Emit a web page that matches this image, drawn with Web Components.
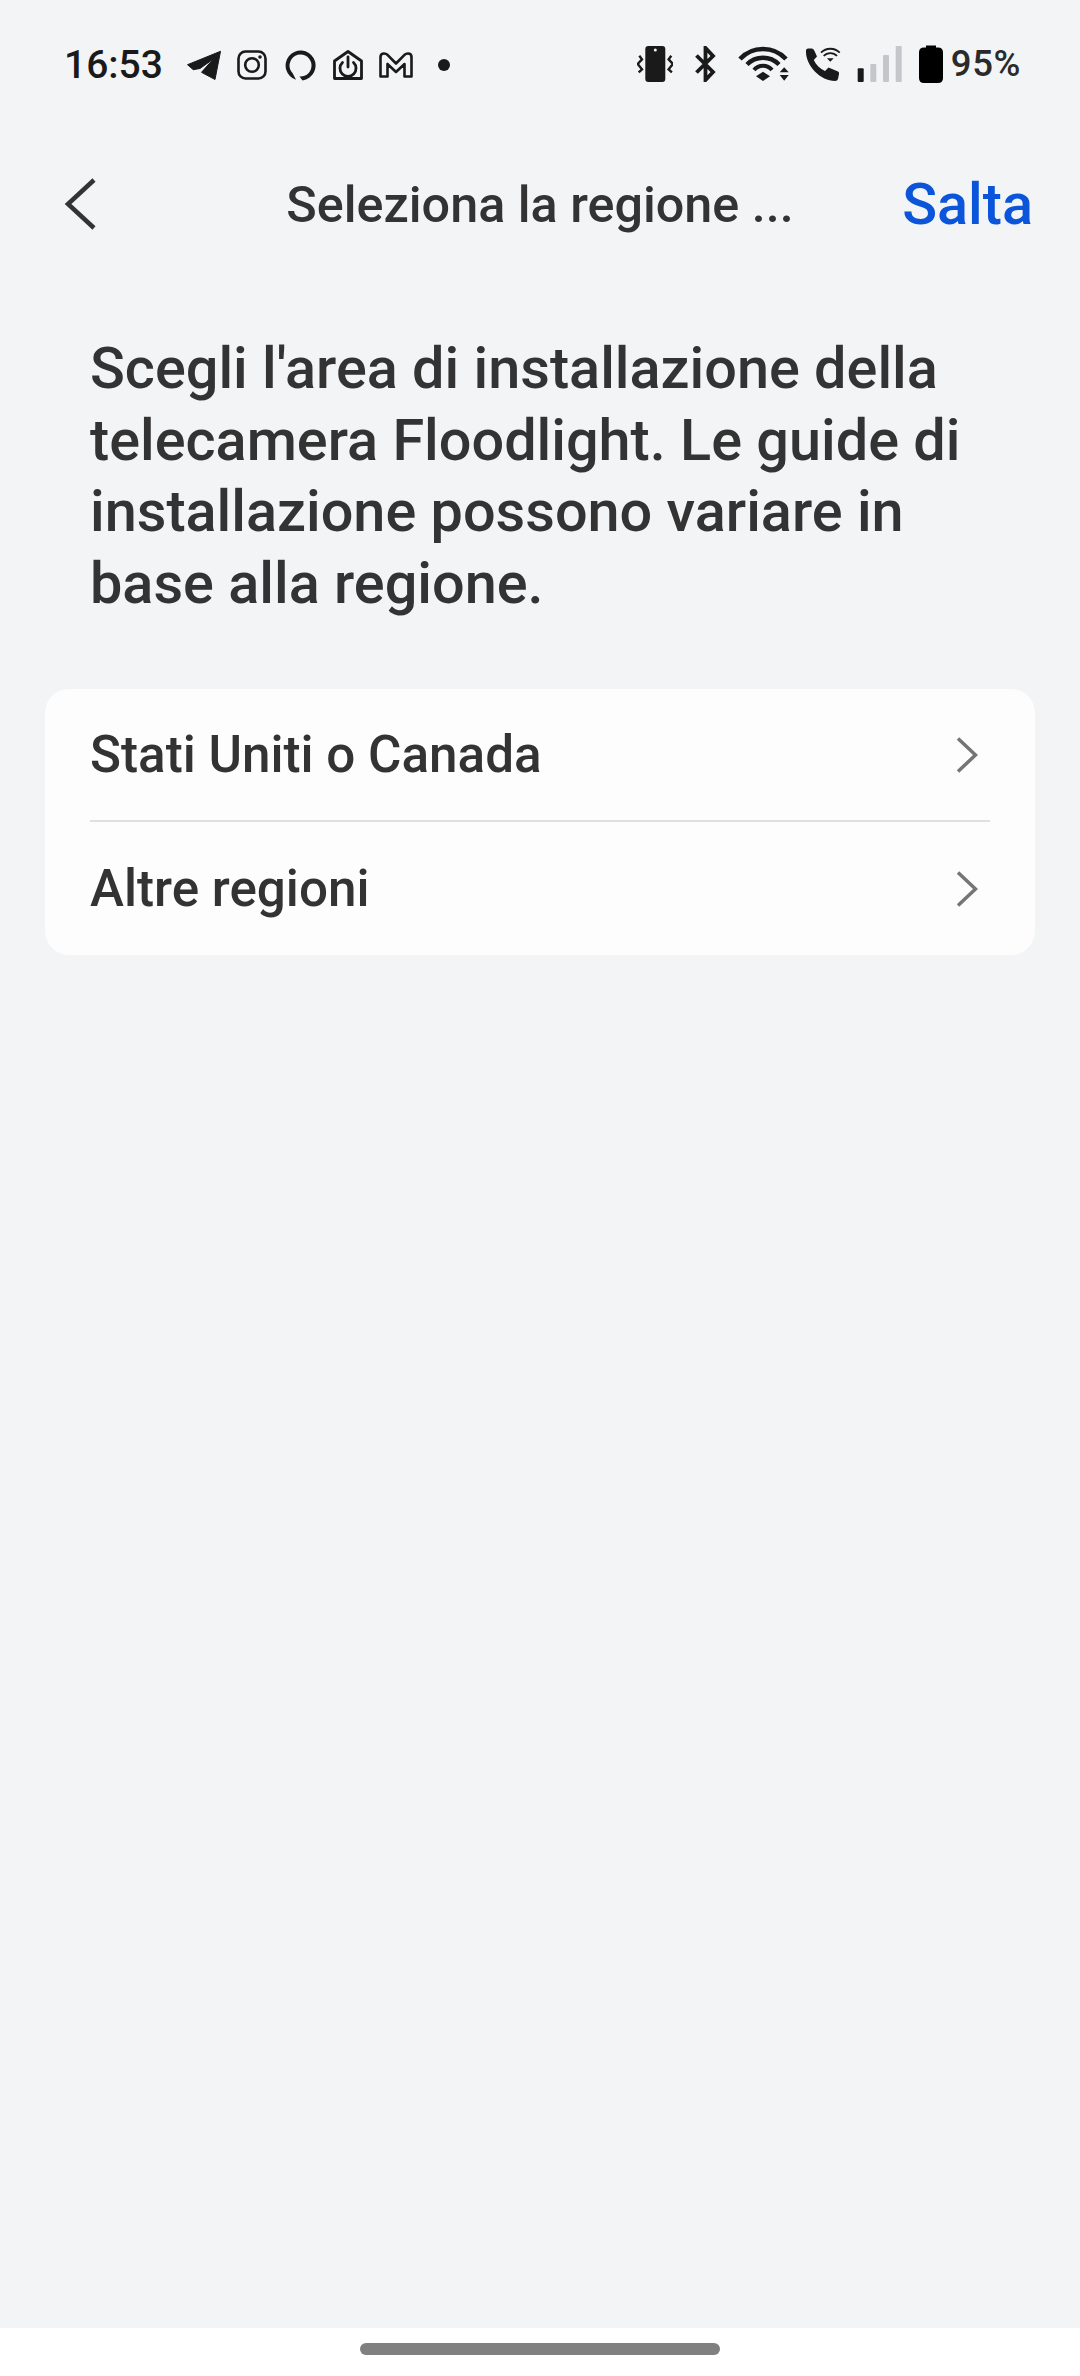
<!DOCTYPE html>
<html lang="it">
<head>
<meta charset="utf-8">
<title>Seleziona la regione</title>
<style>
	html, body { margin: 0; height: 100%; }
	body { background: #f3f4f6; font-family: Roboto, "Noto Sans", sans-serif; color: #333; }
</style>
</head>
<body>
<app-page>
	<status-bar slot="top"></status-bar>
	<app-header skip="Salta">Seleziona la regione ...</app-header>
	<intro-text>Scegli l'area di installazione della telecamera Floodlight. Le guide di installazione possono variare in base alla regione.</intro-text>
	<region-list>
		<region-row>Stati Uniti o Canada</region-row>
		<region-row>Altre regioni</region-row>
	</region-list>
</app-page>

<script>
class AppPage extends HTMLElement {
	constructor() {
		super();
		this.attachShadow({ mode: 'open' });
		this.shadowRoot.innerHTML = `
			<style>
				:host {
					display: flex;
					flex-direction: column;
					height: 2376px;
					box-sizing: border-box;
				}
				main { flex: 1; display: flex; flex-direction: column; }
				.nav {
					height: 48px;
					background: #fff;
					display: flex;
					justify-content: center;
					padding-top: 15px;
					box-sizing: border-box;
				}
				.nav div {
					width: 360px;
					height: 12px;
					border-radius: 6px;
					background: #808080;
				}
			</style>
			<main><slot name="top"></slot><slot></slot></main>
			<div class="nav"><div></div></div>
		`;
	}
}

class StatusBar extends HTMLElement {
	constructor() {
		super();
		this.attachShadow({ mode: 'open' });
		this.shadowRoot.innerHTML = `
			<style>
				:host {
					display: flex;
					align-items: center;
					height: 128px;
					padding: 0 59px 0 64px;
					box-sizing: border-box;
					color: #1a1a1a;
				}
				.time { font-size: 39px; font-weight: 500; line-height: 1; width: 98px; }
				.left, .right { display: flex; align-items: center; }
				.left { margin-top: 2px; }
				.right { margin-left: auto; }
				svg { display: block; flex: none; }
				.pct { font-size: 36.500px; font-weight: 500; line-height: 1; margin-left: 8px; letter-spacing: 0.6px; color: #2a2a2a; }
			</style>
			<div class="left">
				<span class="time">16:53</span>
				<svg style="margin-left:24px" width="35" height="30" viewBox="0 0 35 30"><path d="M1.500 14.700 34.500 1.300 29 29.500 15.500 22.300 27.300 9 14 18.500 7.300 19.700Z" fill="#1a1a1a" stroke="#1a1a1a" stroke-width="1" stroke-linejoin="round"/></svg>
				<svg style="margin-left:16px" width="30" height="30" viewBox="0 0 30 30" fill="none" stroke="#1a1a1a" stroke-width="2.600"><rect x="1.500" y="1.500" width="27" height="27" rx="7"/><circle cx="15" cy="15" r="6.800"/><circle cx="23" cy="7" r="1.800" fill="#1a1a1a" stroke="none"/></svg>
				<svg style="margin-left:18px" width="31" height="31" viewBox="0 0 31 31"><path d="M11 29.800A15 15 0 1 1 17.500 30.400L14.500 26.500A11 11 0 1 0 7.700 23.300Z" fill="#1a1a1a"/></svg>
				<svg style="margin-left:17px" width="30" height="30" viewBox="0 0 30 30" fill="none" stroke="#1a1a1a" stroke-width="2.800" stroke-linejoin="round" stroke-linecap="round"><path d="M1.500 11 15 1.500 28.500 11V28.500H1.500Z"/><path d="M9.500 12.500A8 8 0 1 0 20.500 12.500"/><path d="M15 7V17"/></svg>
				<svg style="margin-left:16px" width="34" height="27" viewBox="0 0 34 27" fill="none" stroke="#1a1a1a" stroke-width="2.600" stroke-linejoin="round"><path d="M1.500 24.500V5Q1.500 1.500 5 1.500 7 1.500 8.500 2.800L17 11.500 25.500 2.800Q27 1.500 29 1.500 32.500 1.500 32.500 5V24.500H25.500V12L17 20 8.500 12V24.500Z"/></svg>
				<svg style="margin-left:25px" width="12" height="12" viewBox="0 0 12 12"><circle cx="6" cy="6" r="6" fill="#1a1a1a"/></svg>
			</div>
			<div class="right">
				<svg width="36" height="36" viewBox="0 0 36 36" fill="none"><rect x="8.300" y="0" width="20" height="36" rx="3" fill="#1a1a1a"/><circle cx="18.300" cy="4" r="1.500" fill="#f3f4f6"/><path d="M2.300 9.700 5 13.300 .7 18 5 23.300 1.700 26.300M34.300 9.700 31.600 13.300 35.900 18 31.600 23.300 34.900 26.300" stroke="#1a1a1a" stroke-width="2.400"/></svg>
				<svg style="margin-left:22px" width="22" height="36" viewBox="0 0 22 36" fill="none" stroke="#1a1a1a" stroke-width="3.800"><path d="M1.500 9.500 18 26 10.500 34V2L18 10 1.500 26.500"/></svg>
				<svg style="margin-left:21px" width="51" height="36" viewBox="0 0 51 36" fill="none" stroke="#1a1a1a"><path d="M2 13A31.450 31.450 0 0 1 48 13" stroke-width="4.600"/><path d="M9 18.500A22.500 22.500 0 0 1 41 18.500" stroke-width="4.400"/><path d="M16 24A11.600 11.600 0 0 1 34 24" stroke-width="4"/><path d="M18 30.200 25 25.700 32 30.200 25 35Z" fill="#1a1a1a" stroke="none"/><path d="M41.700 26.300 46.200 21.300 50.700 26.300ZM41.700 29 46.200 34.700 50.700 29Z" fill="#1a1a1a" stroke="none"/></svg>
				<svg style="margin-left:16px" width="36" height="36" viewBox="0 0 36 36"><path d="M1 4Q1.500 2.500 3 2.500H7Q8.500 2.500 9.500 5L12 10.500 8.800 14C11 19 15 22.500 20 25L23.500 21.500 33 25.500Q34.500 26 34 28L33 33Q32.500 35 30 35C16 35 0 20 1 4Z" fill="#1a1a1a"/><g fill="none" stroke="#1a1a1a" stroke-width="1.800"><path d="M16 6.700A13 13 0 0 1 34.700 6.700"/><path d="M18.700 10A9 9 0 0 1 32 10"/></g><path d="M22 12.300 25.300 15.700 28.700 12.300Z" fill="#1a1a1a"/></svg>
				<svg style="margin-left:16px" width="45" height="36" viewBox="0 0 45 36"><rect x=".7" y="22.300" width="6" height="13.700" rx="1" fill="#1a1a1a"/><rect x="13.300" y="18" width="6" height="18" rx="1" fill="#c4c6c9"/><rect x="26" y="9" width="6" height="27" rx="1" fill="#c4c6c9"/><rect x="38.700" y="0" width="6" height="36" rx="1" fill="#c4c6c9"/></svg>
				<svg style="margin-left:17px" width="24" height="38" viewBox="0 0 24 38"><path d="M5 2.500H7V.5H17V2.500H19Q24 2.500 24 7.500V33Q24 38 19 38H5Q0 38 0 33V7.500Q0 2.500 5 2.500Z" fill="#000"/></svg>
				<span class="pct">95%</span>
			</div>
		`;
	}
}

class AppHeader extends HTMLElement {
	constructor() {
		super();
		this.attachShadow({ mode: 'open' });
		this.shadowRoot.innerHTML = `
			<style>
				:host {
					display: grid;
					grid-template-columns: 1fr auto 1fr;
					align-items: center;
					height: 80px;
					margin-top: 36px;
					padding: 0 47px;
				}
				svg { display: block; margin-left: 17px; }
				.title {
					font-size: 50.300px;
					font-weight: 500;
					color: #333;
				}
				.skip { justify-self: end; font-size: 57.600px; font-weight: 500; color: #0a55d9; }
			</style>
			<svg width="33" height="52" viewBox="0 0 33 52" fill="none"><path d="M30 2 4 26 30 50" stroke="#333" stroke-width="4.500"/></svg>
			<span class="title"><slot></slot></span>
			<span class="skip"></span>
		`;
	}

	connectedCallback() {
		this.shadowRoot.querySelector('.skip').textContent = this.getAttribute('skip');
	}
}

class IntroText extends HTMLElement {
	constructor() {
		super();
		this.attachShadow({ mode: 'open' });
		this.shadowRoot.innerHTML = `
			<style>
				:host {
					display: block;
					padding: 0 90px;
					margin-top: 89px;
					font-size: 57.600px;
					font-weight: 500;
					line-height: 71.500px;
					color: #333;
				}
			</style>
			<slot></slot>
		`;
	}
}

class RegionList extends HTMLElement {
	constructor() {
		super();
		this.attachShadow({ mode: 'open' });
		this.shadowRoot.innerHTML = `
			<style>
				:host {
					display: block;
					margin: 70px 45px 0;
					padding: 0 45px;
					background: #fdfdfd;
					border-radius: 24px;
				}
				::slotted(region-row:not(:last-child)) {
					border-bottom: 2px solid #e0e0e0;
				}
			</style>
			<slot></slot>
		`;
	}
}

class RegionRow extends HTMLElement {
	constructor() {
		super();
		this.attachShadow({ mode: 'open' });
		this.shadowRoot.innerHTML = `
			<style>
				:host {
					display: flex;
					align-items: center;
					justify-content: space-between;
					height: 133px;
					box-sizing: border-box;
					font-size: 51.200px;
					font-weight: 500;
					color: #333;
				}
				svg { display: block; margin-right: 12px; }
			</style>
			<span><slot></slot></span>
			<svg width="22" height="36" viewBox="0 0 22 36" fill="none"><path d="M2 1.500 19.500 18 2 34.500" stroke="#757575" stroke-width="3.500"/></svg>
		`;
	}
}

customElements.define('app-page', AppPage);
customElements.define('status-bar', StatusBar);
customElements.define('app-header', AppHeader);
customElements.define('intro-text', IntroText);
customElements.define('region-list', RegionList);
customElements.define('region-row', RegionRow);
</script>
</body>
</html>
